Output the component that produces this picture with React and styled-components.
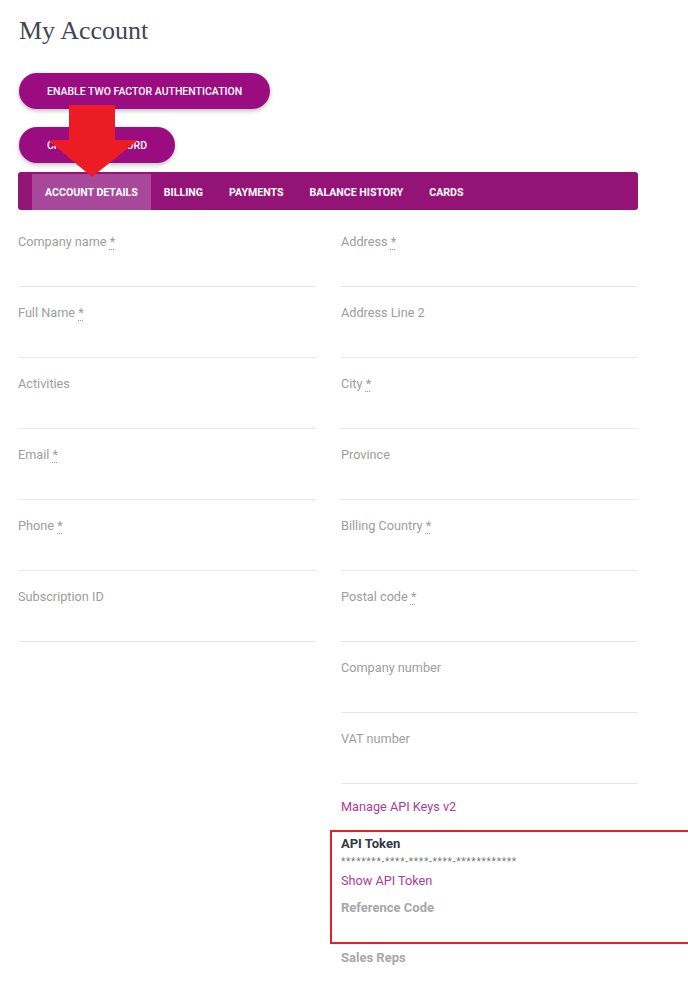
import React from "react";
import styled, { createGlobalStyle } from "styled-components";

const GlobalStyle = createGlobalStyle`
  html, body {
    margin: 0;
    padding: 0;
    background: #fff;
    overflow-x: hidden;
  }
  body {
    font-family: Roboto, "Liberation Sans", sans-serif;
  }
`;

const leftFields = [
  { label: "Company name", required: true },
  { label: "Full Name", required: true },
  { label: "Activities" },
  { label: "Email", required: true },
  { label: "Phone", required: true },
  { label: "Subscription ID" }
];

const rightFields = [
  { label: "Address", required: true },
  { label: "Address Line 2" },
  { label: "City", required: true },
  { label: "Province" },
  { label: "Billing Country", required: true },
  { label: "Postal code", required: true },
  { label: "Company number" },
  { label: "VAT number" }
];

const tabs = ["ACCOUNT DETAILS", "BILLING", "PAYMENTS", "BALANCE HISTORY", "CARDS"];

const Field = ({ label, required }) => (
  <FieldBox>
    <Label>
      {label}
      {required ? (
        <>
          {" "}
          <Req title="required">*</Req>
        </>
      ) : null}
    </Label>
  </FieldBox>
);

export default function App() {
  return (
    <Page>
      <GlobalStyle />
      <Title>My Account</Title>
      <Actions>
        <PillButton>ENABLE TWO FACTOR AUTHENTICATION</PillButton>
        <PillButton>CHANGE PASSWORD</PillButton>
      </Actions>
      <TabBar>
        {tabs.map((t, i) => (
          <Tab key={t} active={i === 0}>
            {t}
          </Tab>
        ))}
      </TabBar>
      <Form>
        <Column>
          {leftFields.map(f => (
            <Field key={f.label} {...f} />
          ))}
        </Column>
        <Column>
          {rightFields.map(f => (
            <Field key={f.label} {...f} />
          ))}
          <LinkText>Manage API Keys v2</LinkText>
          <Highlight>
            <StrongDark>API Token</StrongDark>
            <Masked>********-****-****-****-************</Masked>
            <LinkText small>Show API Token</LinkText>
            <StrongMuted>Reference Code</StrongMuted>
          </Highlight>
          <StrongMuted last>Sales Reps</StrongMuted>
        </Column>
      </Form>
      <Arrow viewBox="0 0 95 73" width="95" height="73">
        <polygon points="24,0 70,0 70,35 93,35 47,72 3,35 24,35" fill="#ec1c24" />
      </Arrow>
    </Page>
  );
}

const Page = styled.div`
  position: relative;
  width: 620px;
  padding: 14px 0 20px 18px;
`;

const Title = styled.h1`
  margin: 0 0 0 1px;
  font-family: "Liberation Serif", serif;
  font-weight: 400;
  font-size: 26px;
  line-height: 34px;
  color: #3f4756;
`;

const Actions = styled.div`
  display: flex;
  flex-direction: column;
  align-items: flex-start;
  gap: 18px;
  margin-top: 25px;
`;

const PillButton = styled.button`
  height: 36px;
  margin-left: 1px;
  padding: 0 28px;
  border: none;
  border-radius: 18px;
  background-color: #9b0c80;
  color: #fff;
  font-family: Roboto, sans-serif;
  font-size: 10.5px;
  font-weight: 500;
  box-shadow: rgba(0, 0, 0, 0.25) 0 2px 4px;
`;

const TabBar = styled.div`
  display: flex;
  align-items: stretch;
  height: 38px;
  margin-top: 9px;
  padding: 2px 0 0 14px;
  box-sizing: border-box;
  border-radius: 3px;
  background-color: #931377;
`;

const Tab = styled.div`
  display: flex;
  align-items: center;
  padding: 0 13px;
  color: #fff;
  font-size: 10.6px;
  font-weight: 700;
  background-color: ${props => (props.active ? "#a8489b" : "transparent")};
`;

const Form = styled.div`
  display: grid;
  grid-template-columns: 298px 297px;
  column-gap: 25px;
  margin-top: 6px;
`;

const Column = styled.div`
  display: flex;
  flex-direction: column;
  align-items: stretch;
`;

const FieldBox = styled.div`
  height: 71px;
  box-sizing: border-box;
  padding-top: 17px;
  border-bottom: 1px solid #e8e8e8;
`;

const Label = styled.div`
  font-size: 12.7px;
  line-height: 18px;
  color: #9d9d9d;
`;

const Req = styled.abbr`
  text-decoration: underline dotted;
  text-underline-offset: 3px;
  text-decoration-thickness: 1px;
  cursor: help;
`;

const LinkText = styled.div`
  margin-top: ${props => (props.small ? "3px" : "14px")};
  font-size: 12.7px;
  line-height: 18px;
  color: #a83d98;
`;

const Highlight = styled.div`
  display: flex;
  flex-direction: column;
  margin: 14px -52px 0 -11px;
  padding: 3px 0 25px 9px;
  border: 2px solid #e3202c;
`;

const StrongDark = styled.div`
  font-size: 13px;
  font-weight: 700;
  line-height: 18px;
  color: #333a44;
`;

const Masked = styled.div`
  margin-top: 2px;
  font-size: 10px;
  line-height: 14px;
  color: #7a7a7a;
  letter-spacing: 0.75px;
`;

const StrongMuted = styled.div`
  margin-top: ${props => (props.last ? "5px" : "9px")};
  font-size: 13px;
  font-weight: 700;
  line-height: 18px;
  color: #a7a7a7;
`;

const Arrow = styled.svg`
  position: absolute;
  left: 45px;
  top: 105px;
`;
